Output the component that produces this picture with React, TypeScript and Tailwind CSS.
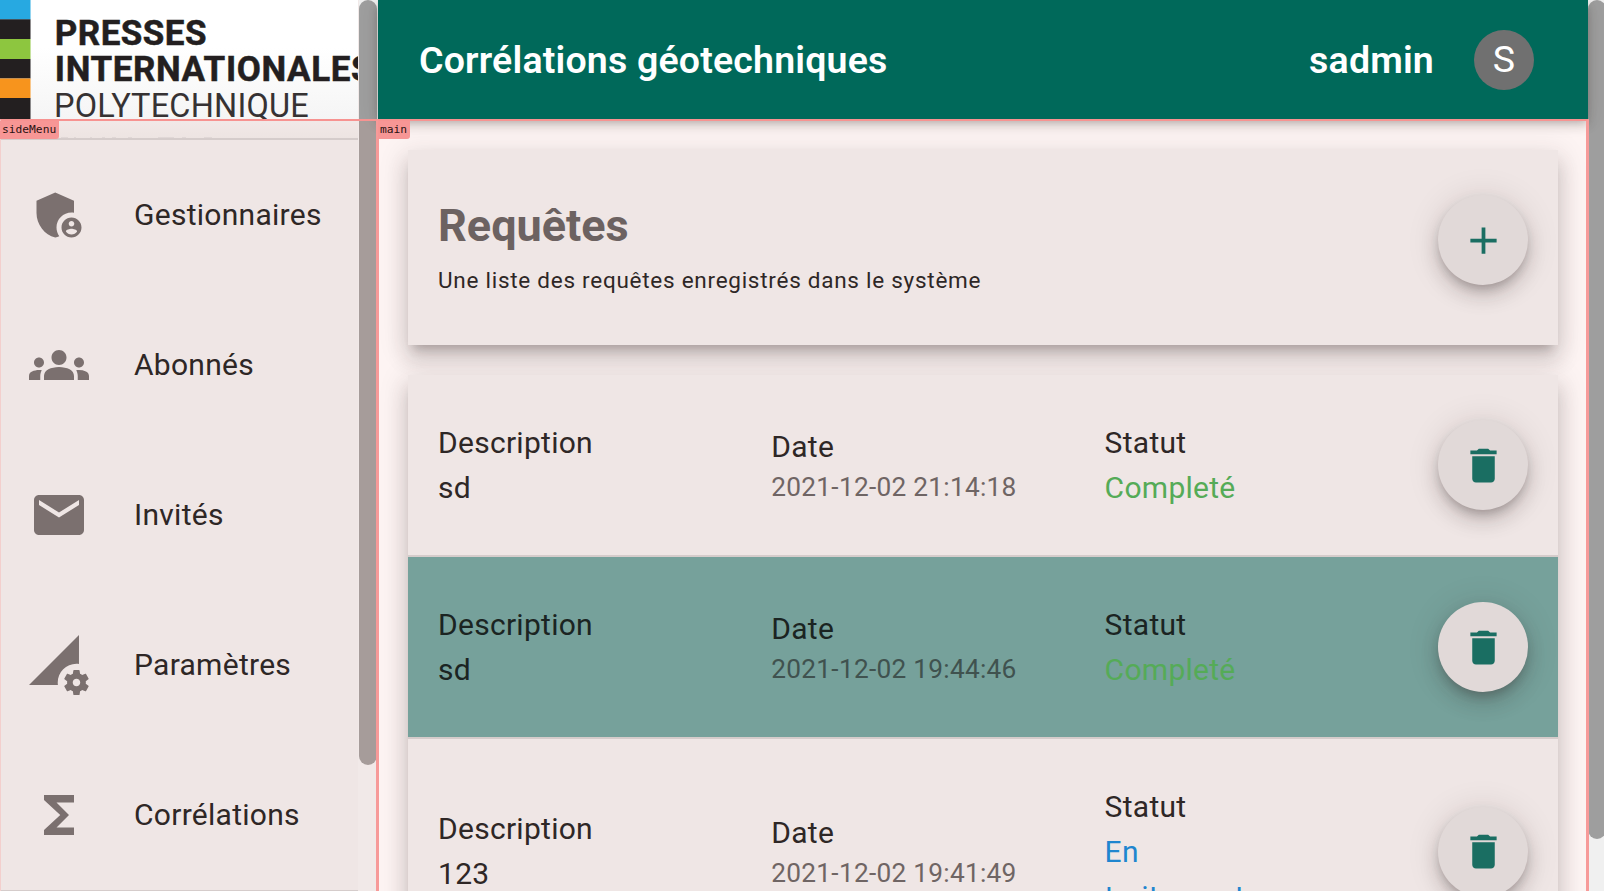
import React from "react";
import {
  MdAdd,
  MdAdminPanelSettings,
  MdDelete,
  MdEmail,
  MdFunctions,
  MdGroups,
  MdPermDataSetting,
} from "react-icons/md";
import type { IconType } from "react-icons";

const NAV: { label: string; Icon: IconType }[] = [
  { label: "Gestionnaires", Icon: MdAdminPanelSettings },
  { label: "Abonnés", Icon: MdGroups },
  { label: "Invités", Icon: MdEmail },
  { label: "Paramètres", Icon: MdPermDataSetting },
  { label: "Corrélations", Icon: MdFunctions },
];

type Request = { description: string; date: string; status: "done" | "pending"; selected?: boolean };

const REQUESTS: Request[] = [
  { description: "sd", date: "2021-12-02 21:14:18", status: "done" },
  { description: "sd", date: "2021-12-02 19:44:46", status: "done", selected: true },
  { description: "123", date: "2021-12-02 19:41:49", status: "pending" },
];

const CARD_SHADOW =
  "shadow-[0_9.4px_9.4px_-5.6px_rgba(50,38,36,0.24),0_15px_18.75px_1.9px_rgba(50,38,36,0.14),0_5.6px_26px_3.75px_rgba(50,38,36,0.11)]";

function Logo() {
  return (
    <svg width="358" height="138" viewBox="0 0 358 138" className="block shrink-0">
      <defs>
        <linearGradient id="paper" x1="0" y1="0" x2="0" y2="1">
          <stop offset="0.4" stopColor="#ffffff" />
          <stop offset="1" stopColor="#f5f5f5" />
        </linearGradient>
        <linearGradient id="fold" x1="0" y1="0" x2="0" y2="1">
          <stop offset="0" stopColor="#f2e9e8" />
          <stop offset="1" stopColor="#ede4e2" />
        </linearGradient>
      </defs>
      <rect width="358" height="119" fill="url(#paper)" />
      <rect y="119" width="358" height="19" fill="url(#fold)" />
      <rect width="30.5" height="19.5" fill="#27a9e1" />
      <rect y="19.3" width="30.5" height="19.7" fill="#231f20" />
      <rect y="39" width="30.5" height="20" fill="#8dc63f" />
      <rect y="59" width="30.5" height="19.5" fill="#231f20" />
      <rect y="78.5" width="30.5" height="19.5" fill="#f7941d" />
      <rect y="98" width="30.5" height="21" fill="#231f20" />
      <g fill="#231f20" fontFamily="Roboto, sans-serif">
        <g stroke="#231f20" strokeWidth="0.5">
          <text x="54.8" y="45" fontSize="35" fontWeight="700" textLength="152" lengthAdjust="spacing">
            PRESSES
          </text>
          <text x="54.8" y="81.3" fontSize="35" fontWeight="700" textLength="318" lengthAdjust="spacing">
            INTERNATIONALES
          </text>
        </g>
        <text x="54" y="117.4" fontSize="32.5" fontWeight="400" fill="#363233" textLength="255" lengthAdjust="spacing">
          POLYTECHNIQUE
        </text>
      </g>
      <g fill="#e0d7d6">
        <rect x="61" y="137" width="7" height="1" />
        <rect x="74" y="137" width="2" height="1" />
        <rect x="90" y="137" width="2" height="1" />
        <rect x="102" y="137" width="3" height="1" />
        <rect x="112" y="137" width="4" height="1" />
        <rect x="128" y="137" width="4" height="1" />
        <rect x="158" y="137" width="16" height="1" />
        <rect x="182" y="137" width="4" height="1" />
        <rect x="204" y="137" width="8" height="1" />
      </g>
    </svg>
  );
}

function Fab({ Icon, label }: { Icon: IconType; label: string }) {
  return (
    <button
      aria-label={label}
      className="flex size-[90px] shrink-0 items-center justify-center rounded-full bg-[#e1d9d8] text-[#1a6e62] shadow-[0_5.6px_9.4px_-1.9px_rgba(40,25,25,0.24),0_11.25px_18.75px_0_rgba(40,25,25,0.15),0_1.9px_33.75px_0_rgba(40,25,25,0.12)]"
    >
      <Icon size={45} />
    </button>
  );
}

function Row({ item }: { item: Request }) {
  return (
    <li
      className={`flex shrink-0 items-center border-b-2 border-[#d5cccb] px-[30px] py-[45px] leading-[45px] ${
        item.selected ? "bg-[#76a19b] text-[#1b2422]" : "text-[#2e2726]"
      }`}
    >
      <div className={`w-[333.3px] shrink-0 ${item.status === "pending" ? "mb-px" : ""}`}>
        <p>Description</p>
        <p>{item.description}</p>
      </div>
      <div className="w-[333.3px] shrink-0">
        <p>Date</p>
        <p
          className={`text-[26.25px] leading-[37.5px] tracking-[0.01em] ${
            item.selected ? "text-[#40524f]" : "text-[#6f6564]"
          }`}
        >
          {item.date}
        </p>
      </div>
      <div className="w-[150px] shrink-0">
        <p>Statut</p>
        {item.status === "done" ? (
          <p className="text-[#55ab57]">Completé</p>
        ) : (
          <p className="text-[#1f86cf]">En traitement</p>
        )}
      </div>
      <div className="ml-auto">
        <Fab Icon={MdDelete} label="Supprimer" />
      </div>
    </li>
  );
}

export default function App() {
  return (
    <div className="relative flex h-[891px] w-[1604px] overflow-hidden bg-[#fdf4f3] font-['Roboto',sans-serif] text-[30px] tracking-[0.00938em] text-[#2e2726]">
      <aside className="flex w-[378px] shrink-0 bg-[#efe6e5]">
        <div className="w-[358px] shrink-0 overflow-hidden">
          <Logo />
          <nav className="border-y-2 border-[#d5cccb]">
            {NAV.map(({ label, Icon }) => (
              <a key={label} className="flex h-[150px] items-center pl-[29px]">
                <Icon size={60} className="shrink-0 text-[#7b706f]" />
                <span className="mb-0.5 ml-[45px]">{label}</span>
              </a>
            ))}
          </nav>
        </div>
        <div className="flex w-5 flex-col bg-[#f1e9e8] pl-px">
          <div className="h-[119px] bg-[#f0f0f0]">
            <div className="h-full w-[18px] rounded-t-[9px] bg-[#9e9e9e]" />
          </div>
          <div className="h-[646px] w-[18px] rounded-b-[9px] bg-[#a69c9a]" />
        </div>
      </aside>

      <div className="flex w-[1210px] shrink-0 flex-col">
        <header className="z-10 flex h-[119px] shrink-0 items-center bg-[#00695a] pr-[54px] pl-[41px] text-[37.5px] font-semibold tracking-[0.0048em] text-white shadow-[0_3.75px_7.5px_-1.9px_rgba(50,38,36,0.24),0_7.5px_9.4px_0_rgba(50,38,36,0.15),0_1.9px_18.75px_0_rgba(50,38,36,0.12)]">
          <h1 className="pt-px">Corrélations géotechniques</h1>
          <span className="ml-auto pt-px">sadmin</span>
          <div className="ml-10 flex size-[60px] items-center justify-center rounded-full bg-[#707070] font-normal">
            S
          </div>
        </header>
        <main className="flex min-h-0 flex-1 flex-col gap-[30px] overflow-hidden px-[30px] pt-[31px]">
          <section className={`flex h-[195px] shrink-0 items-center bg-[#efe6e5] px-[30px] ${CARD_SHADOW}`}>
            <div className="-mt-px">
              <h2 className="text-[45px] leading-[60px] font-bold tracking-normal text-[#6c6261]">Requêtes</h2>
              <p className="mt-1.5 text-[22.5px] leading-[37px] tracking-[0.0327em]">
                Une liste des requêtes enregistrés dans le système
              </p>
            </div>
            <div className="ml-auto -mt-[15px]">
              <Fab Icon={MdAdd} label="Ajouter" />
            </div>
          </section>
          <ul className={`flex shrink-0 flex-col bg-[#efe6e5] ${CARD_SHADOW}`}>
            {REQUESTS.map((item) => (
              <Row key={item.date} item={item} />
            ))}
          </ul>
        </main>
      </div>

      <div className="w-4 shrink-0 bg-[#f0f0f0]">
        <div className="h-[839px] w-[18px] rounded-[9px] bg-[#9e9e9e]" />
      </div>

      {/* Grid-area outlines with their names */}
      <div className="pointer-events-none absolute top-[119px] left-0 z-20 h-[772px] w-[378px] border-t-2 border-r-2 border-l border-t-[#f79391] border-r-[#f79a99] border-l-[#f3cfcd]">
        <span className="absolute top-0 left-0 -ml-px flex h-[18px] items-center rounded-br-[3px] bg-[#f79695] pr-[3px] pl-[2px] font-['DejaVu_Sans_Mono',monospace] text-[11.25px] tracking-normal text-[#2a1212]">
          sideMenu
        </span>
      </div>
      <div className="pointer-events-none absolute top-[119px] left-[377px] z-20 h-[772px] w-[1212px] border-x-[3px] border-t-2 border-x-[#f79a99] border-t-[#f79391] border-l-2">
        <span className="absolute top-0 -left-px flex h-[18px] items-center rounded-br-[3px] bg-[#f79695] pr-[3px] pl-[2px] font-['DejaVu_Sans_Mono',monospace] text-[11.25px] tracking-normal text-[#2a1212]">
          main
        </span>
      </div>
    </div>
  );
}
